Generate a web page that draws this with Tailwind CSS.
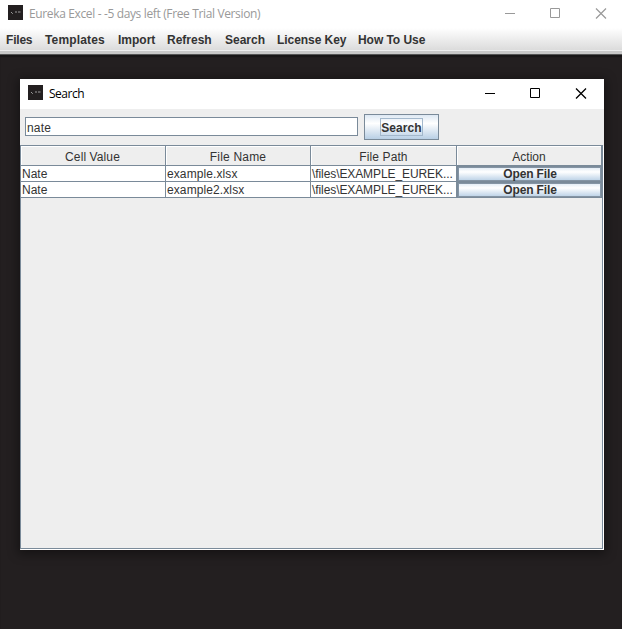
<!DOCTYPE html>
<html lang="en">
<head>
<meta charset="utf-8">
<title>Eureka Excel</title>
<script src="https://cdn.jsdelivr.net/npm/@tailwindcss/browser@4"></script>
</head>
<body class="w-[622px] h-[629px] overflow-hidden bg-[#231f20] font-['Liberation_Sans',Arial,sans-serif] text-[12px] leading-[16px] text-[#333]">
<div class="flex flex-col h-full">
  <header class="flex h-[28px] bg-white text-[#999]">
    <svg class="ml-2 mt-[5px] w-[15px] h-[15px] shrink-0" viewBox="0 0 15 15"><path fill="#231f20" d="M0 0h15v15H0z"/><path stroke="#bbb" stroke-width=".8" d="M3 7.500h1M4 8.500h.8M7 7h2M10 7h2.500"/></svg>
    <h1 class="ml-[6px] mt-[6px] whitespace-nowrap font-['Open_Sans',sans-serif] text-[12px] tracking-[-0.36px]">Eureka Excel - -5 days left (Free Trial Version)</h1>
    <svg class="ml-auto mr-[15px] mt-2 w-[102px] h-[11px] shrink-0" viewBox="0 0 102 11" fill="none" stroke="#999"><path d="M0 5.500h10M45.500 .5h9v9h-9z"/><path stroke-width="1.200" d="M91 .5l10 10M101 .5l-10 10"/></svg>
  </header>
  <nav class="flex h-[26px] shrink-0 pl-[6px] pt-1 font-bold whitespace-nowrap bg-linear-to-b from-white to-[#dadada] border-b-3 border-[#c8c8c8] shadow-[inset_0_-1px_0_#eee]">
    <a class="w-[39px] tracking-[-0.2px]">Files</a><a class="w-[73px] tracking-[0.15px]">Templates</a><a class="w-[49px]">Import</a><a class="w-[58px]">Refresh</a><a class="w-[52px]">Search</a><a class="w-[81px] tracking-[-0.05px]">License Key</a><a class="tracking-[-0.05px]">How To Use</a>
  </nav>
  <main class="flex-1 border-t border-[#555] pl-5 pt-[24px] shadow-[inset_0_2px_1px_#191718]">
    <section class="flex flex-col w-[584px] h-[471px] bg-[#eee] shadow-[0_2px_10px_2px_#0006]">
      <div class="flex h-[30px] shrink-0 bg-white text-black">
        <svg class="ml-2 mt-[6px] w-[15px] h-[15px]" viewBox="0 0 15 15"><path fill="#231f20" d="M0 0h15v15H0z"/><path stroke="#bbb" stroke-width=".8" d="M3 7.500h1M4 8.500h.8M7 7h2M10 7h2.500"/></svg>
        <h2 class="ml-[6px] mt-[7px] font-['Open_Sans',sans-serif] tracking-[-0.5px]">Search</h2>
        <svg class="ml-auto mr-[17px] mt-[9px] w-[102px] h-[11px]" viewBox="0 0 102 11" fill="none" stroke="#000"><path d="M0 5.500h10M45.500 .5h9v9h-9z"/><path stroke-width="1.300" d="M91 .5l10 10M101 .5l-10 10"/></svg>
      </div>
      <form class="flex h-[36px] shrink-0 pl-[5px] pt-[5px]">
        <div class="mt-[3px] w-[333px] h-[19px] bg-white border border-[#7a8a99] pl-px pt-[3px] leading-[15px] tracking-[0.15px]">nate</div>
        <button type="button" class="ml-[6px] w-[75px] h-[26px] flex items-center justify-center border border-[#7a8a99] font-bold bg-linear-to-b from-[#dde8f3] via-white via-35% to-[#b8cfe5]"><span class="w-[43px] h-[18px] flex items-center justify-center border border-[#a3b8cc] pt-px tracking-[0.1px]">Search</span></button>
      </form>
      <div class="flex-1 w-[583px] mb-px border border-[#7a8a99] shadow-[1px_1px_0_white] whitespace-nowrap">
        <div class="grid grid-cols-[145px_145px_146px_145px] grid-rows-[20px_16px_16px] [&>*]:border-r [&>*]:border-b [&>*]:border-[#7a8a99]">
          <div class="text-center pt-[3px] pr-px tracking-[0.1px] shadow-[inset_1px_1px_0_white]">Cell Value</div><div class="text-center pt-[3px] tracking-[0.2px] shadow-[inset_1px_1px_0_white]">File Name</div><div class="text-center pt-[3px] tracking-[0.1px] shadow-[inset_1px_1px_0_white]">File Path</div><div class="text-center pt-[3px] shadow-[inset_1px_1px_0_white]">Action</div>
          <div class="bg-white pl-px">Nate</div><div class="bg-white pl-px tracking-[0.1px]">example.xlsx</div><div class="bg-white pl-px tracking-[-0.09px]">\files\EXAMPLE_EUREK...</div><button class="border-t border-l font-bold leading-[14px] pl-px shadow-[inset_0_0_0_1px_#8494a4] bg-linear-to-b from-[#dde8f3] via-white via-35% to-[#b8cfe5] tracking-[-0.15px]">Open File</button>
          <div class="bg-white pl-px">Nate</div><div class="bg-white pl-px tracking-[0.1px]">example2.xlsx</div><div class="bg-white pl-px tracking-[-0.09px]">\files\EXAMPLE_EUREK...</div><button class="border-t border-l font-bold leading-[14px] pl-px shadow-[inset_0_0_0_1px_#8494a4] bg-linear-to-b from-[#dde8f3] via-white via-35% to-[#b8cfe5] tracking-[-0.15px]">Open File</button>
        </div>
      </div>
    </section>
  </main>
</div>
</body>
</html>
